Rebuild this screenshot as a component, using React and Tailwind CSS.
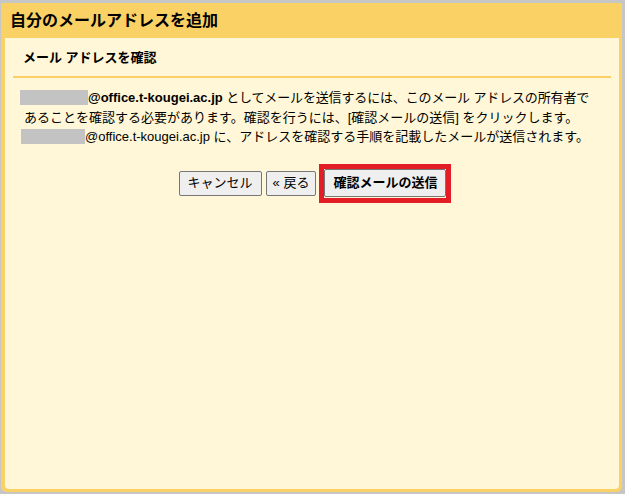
import React from "react";

const font = { fontFamily: '"Liberation Sans", "Noto Sans CJK JP", sans-serif' };

export default function App() {
  return (
    <div
      className="w-[625px] h-[494px] bg-[#c6c6c6] pt-[3px] pl-[1px] pr-[3px] pb-[2px] text-black"
      style={font}
    >
      <div className="h-full flex flex-col bg-[#fad165] rounded-b-[6px] pl-[4px] pr-[3px] pb-[3px]">
        <div className="h-[35px] flex items-center pl-[5px] font-bold text-[16px] leading-[20px]">
          自分のメールアドレスを追加
        </div>
        <div className="flex-1 bg-[#fff7d7] rounded-b-[4px]">
          <div className="mx-[8px] border-b-2 border-[#fad165] pl-[10px] pt-[11px] pb-[10px] font-bold text-[13px] leading-[17px]">
            メール アドレスを確認
          </div>
          <div className="pl-[15px] pt-[10px] text-[13px] leading-[19.5px]">
            <p className="flex items-center">
              <span className="inline-block w-[68px] h-[15px] bg-[#c3c3c3]"></span>
              <span className="font-bold">@office.t-kougei.ac.jp</span>
              <span className="tracking-[-0.15px]">&nbsp;としてメールを送信するには、このメール アドレスの所有者で</span>
            </p>
            <p className="pl-[4px]">
              あることを確認する必要があります。確認を行うには、[確認メールの送信] をクリックします。
            </p>
            <p className="flex items-center">
              <span className="inline-block w-[64px] h-[15px] ml-[1px] bg-[#c3c3c3]"></span>
              <span>@office.t-kougei.ac.jp に、アドレスを確認する手順を記載したメールが送信されます。</span>
            </p>
          </div>
          <div className="flex items-center justify-center pl-[6px] mt-[17px] text-[13px]">
            <button className="h-[25px] px-[8px] bg-[#efefef] border border-[#767676] rounded-[2px] leading-[16px]">
              キャンセル
            </button>
            <button className="h-[25px] px-[6px] ml-[4px] bg-[#efefef] border border-[#767676] rounded-[2px] leading-[16px]">
              « 戻る
            </button>
            <div className="ml-[3px] border-[5px] border-[#e31d25] pb-[1px]">
              <button className="h-[28px] px-[8px] bg-[#efefef] border border-[#767676] rounded-[2px] font-bold leading-[16px] block">
                確認メールの送信
              </button>
            </div>
          </div>
        </div>
      </div>
    </div>
  );
}
